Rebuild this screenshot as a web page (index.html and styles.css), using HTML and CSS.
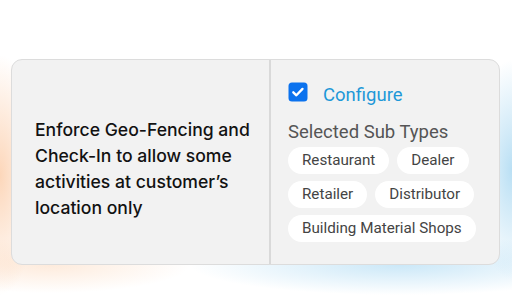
FILE: index.html
```html
<!DOCTYPE html>
<html>
<head>
<meta charset="utf-8">
<link rel="stylesheet" href="styles.css">
</head>
<body>
<div class="stage">
  <div class="card">
    <div class="cell cell-left">
      <p class="statement">Enforce Geo-Fencing and Check-In to allow some activities at customer’s location only</p>
    </div>
    <div class="cell cell-right">
      <div class="configure">
        <span class="checkbox">
          <svg viewBox="0 0 20 20" width="20" height="20"><rect x="0.5" y="0.5" width="19" height="19" rx="3.5" fill="#0b72ee"/><path d="M5.3 10.3l3.1 3 6.1-6.4" fill="none" stroke="#fff" stroke-width="2.3" stroke-linecap="round" stroke-linejoin="round"/></svg>
        </span>
        <span class="configure-label">Configure</span>
      </div>
      <div class="subtypes-title">Selected Sub Types</div>
      <div class="chips">
        <span class="chip">Restaurant</span>
        <span class="chip">Dealer</span>
        <span class="chip">Retailer</span>
        <span class="chip">Distributor</span>
        <span class="chip">Building Material Shops</span>
      </div>
    </div>
  </div>
</div>
</body>
</html>
```

FILE: styles.css
```css
html, body {
  margin: 0;
  padding: 0;
}
body {
  width: 512px;
  height: 302px;
  overflow: hidden;
  font-family: Roboto, "Liberation Sans", sans-serif;
  background: #fff;
}
.stage {
  width: 512px;
  height: 302px;
  box-sizing: border-box;
  padding: 59px 12px 0 11px;
  background:
    radial-gradient(ellipse 40px 120px at 0px 175px, rgba(252, 210, 178, 0.9), rgba(252, 210, 178, 0) 100%),
    radial-gradient(ellipse 40px 110px at 512px 170px, rgba(178, 220, 243, 0.9), rgba(178, 220, 243, 0) 100%),
    radial-gradient(ellipse 210px 30px at 400px 265px, rgba(190, 226, 246, 0.8), rgba(190, 226, 246, 0) 100%),
    radial-gradient(ellipse 140px 28px at 50px 265px, rgba(253, 228, 208, 0.75), rgba(253, 228, 208, 0) 100%),
    #fff;
}
.card {
  display: flex;
  height: 206px;
  box-sizing: border-box;
  border: 1.5px solid #dcdcdc;
  border-radius: 11px;
  background: #f2f2f2;
  overflow: hidden;
}
.cell-left {
  width: 259px;
  flex: none;
  border-right: 2px solid #d9d9d9;
  display: flex;
  align-items: center;
  box-sizing: border-box;
  padding: 0 6px 0 23px;
}
.statement {
  margin: 0;
  font-family: Inter, Roboto, sans-serif;
  font-size: 17.6px;
  line-height: 26px;
  font-weight: 500;
  color: #121212;
  padding-top: 13px;
}
.cell-right {
  flex: 1;
  padding: 22px 0 0 17px;
}
.configure {
  display: flex;
  align-items: flex-start;
  gap: 15px;
}
.checkbox {
  display: flex;
  width: 20px;
  height: 20px;
}
.configure-label {
  font-size: 18.5px;
  line-height: 22px;
  color: #1e98d8;
  margin-top: 2px;
}
.subtypes-title {
  margin-top: 15px;
  font-size: 18.5px;
  color: #555;
  line-height: 22px;
}
.chips {
  margin-top: 4px;
  display: flex;
  flex-wrap: wrap;
  gap: 7px 8px;
  width: 192px;
}
.chip {
  background: #fff;
  border-radius: 14px;
  height: 27px;
  line-height: 27px;
  padding: 0 14px;
  font-size: 15.2px;
  color: #444;
}
```
